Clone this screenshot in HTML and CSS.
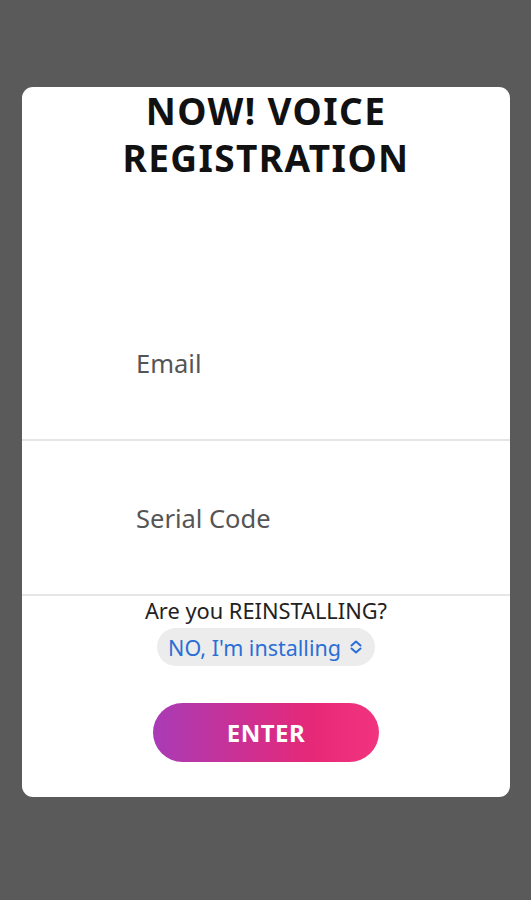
FILE: index.html
```html
<!DOCTYPE html>
<html lang="en">
<head>
    <meta charset="UTF-8">
    <meta name="viewport" content="width=device-width, initial-scale=1.0">
    <title>Voice Registration</title>
    <link rel="stylesheet" href="styles.css">
</head>
<body>
<div class="card">
    <h1 class="title">NOW! VOICE<br>REGISTRATION</h1>

    <div class="fields">
        <div class="field">
            <input type="text" class="field-input" placeholder="Email">
        </div>
        <div class="field">
            <input type="text" class="field-input" placeholder="Serial Code">
        </div>
    </div>

    <p class="question">Are you REINSTALLING?</p>
    <div class="select">
        <span>NO, I'm installing</span>
        <svg class="chevrons" width="14" height="16" viewBox="0 0 14 16">
            <path d="M2.5 6.5 L7 2.5 L11.5 6.5" fill="none" stroke="#2a6fd6" stroke-width="2" stroke-linecap="round" stroke-linejoin="round"/>
            <path d="M2.5 9.5 L7 13.5 L11.5 9.5" fill="none" stroke="#2a6fd6" stroke-width="2" stroke-linecap="round" stroke-linejoin="round"/>
        </svg>
    </div>

    <button class="enter-button">ENTER</button>
</div>
</body>
</html>
```

FILE: styles.css
```css
body {
    margin: 0;
    padding: 87px 21px 0 22px;
    background-color: #5a5a5a;
    font-family: "Noto Sans", "Open Sans", sans-serif;
    color: #222;
}

.card {
    background-color: #fff;
    border-radius: 11px;
    height: 710px;
    display: flex;
    flex-direction: column;
    align-items: center;
}

.title {
    margin: 0;
    font-size: 37px;
    line-height: 47px;
    font-weight: 700;
    letter-spacing: 1.4px;
    text-align: center;
    color: #111;
}

.fields {
    margin-top: 105px;
    width: 100%;
}

.field {
    height: 153px;
    display: flex;
    align-items: center;
    border-bottom: 2px solid #e6e6e6;
}

.field-input {
    border: none;
    outline: none;
    background: transparent;
    margin-left: 112px;
    font-family: inherit;
    font-size: 25.5px;
    color: #333;
    width: 320px;
}

.field-input::placeholder {
    color: #555;
}

.question {
    margin: 2px 0 0;
    font-size: 21.8px;
    line-height: 26px;
    color: #222;
}

.select {
    margin-top: 4px;
    height: 38px;
    padding: 0 12px 0 11px;
    border-radius: 19px;
    background-color: #ececec;
    display: flex;
    align-items: center;
    gap: 8px;
    font-size: 21.5px;
    color: #2a6fd6;
}

.enter-button {
    margin-top: 37px;
    width: 226px;
    height: 59px;
    border: none;
    border-radius: 30px;
    background: linear-gradient(to right, #a93bb6, #e62878 70%, #f2347f);
    color: #fff;
    font-family: inherit;
    font-size: 24px;
    font-weight: 700;
    letter-spacing: 0.5px;
    cursor: pointer;
}
```
